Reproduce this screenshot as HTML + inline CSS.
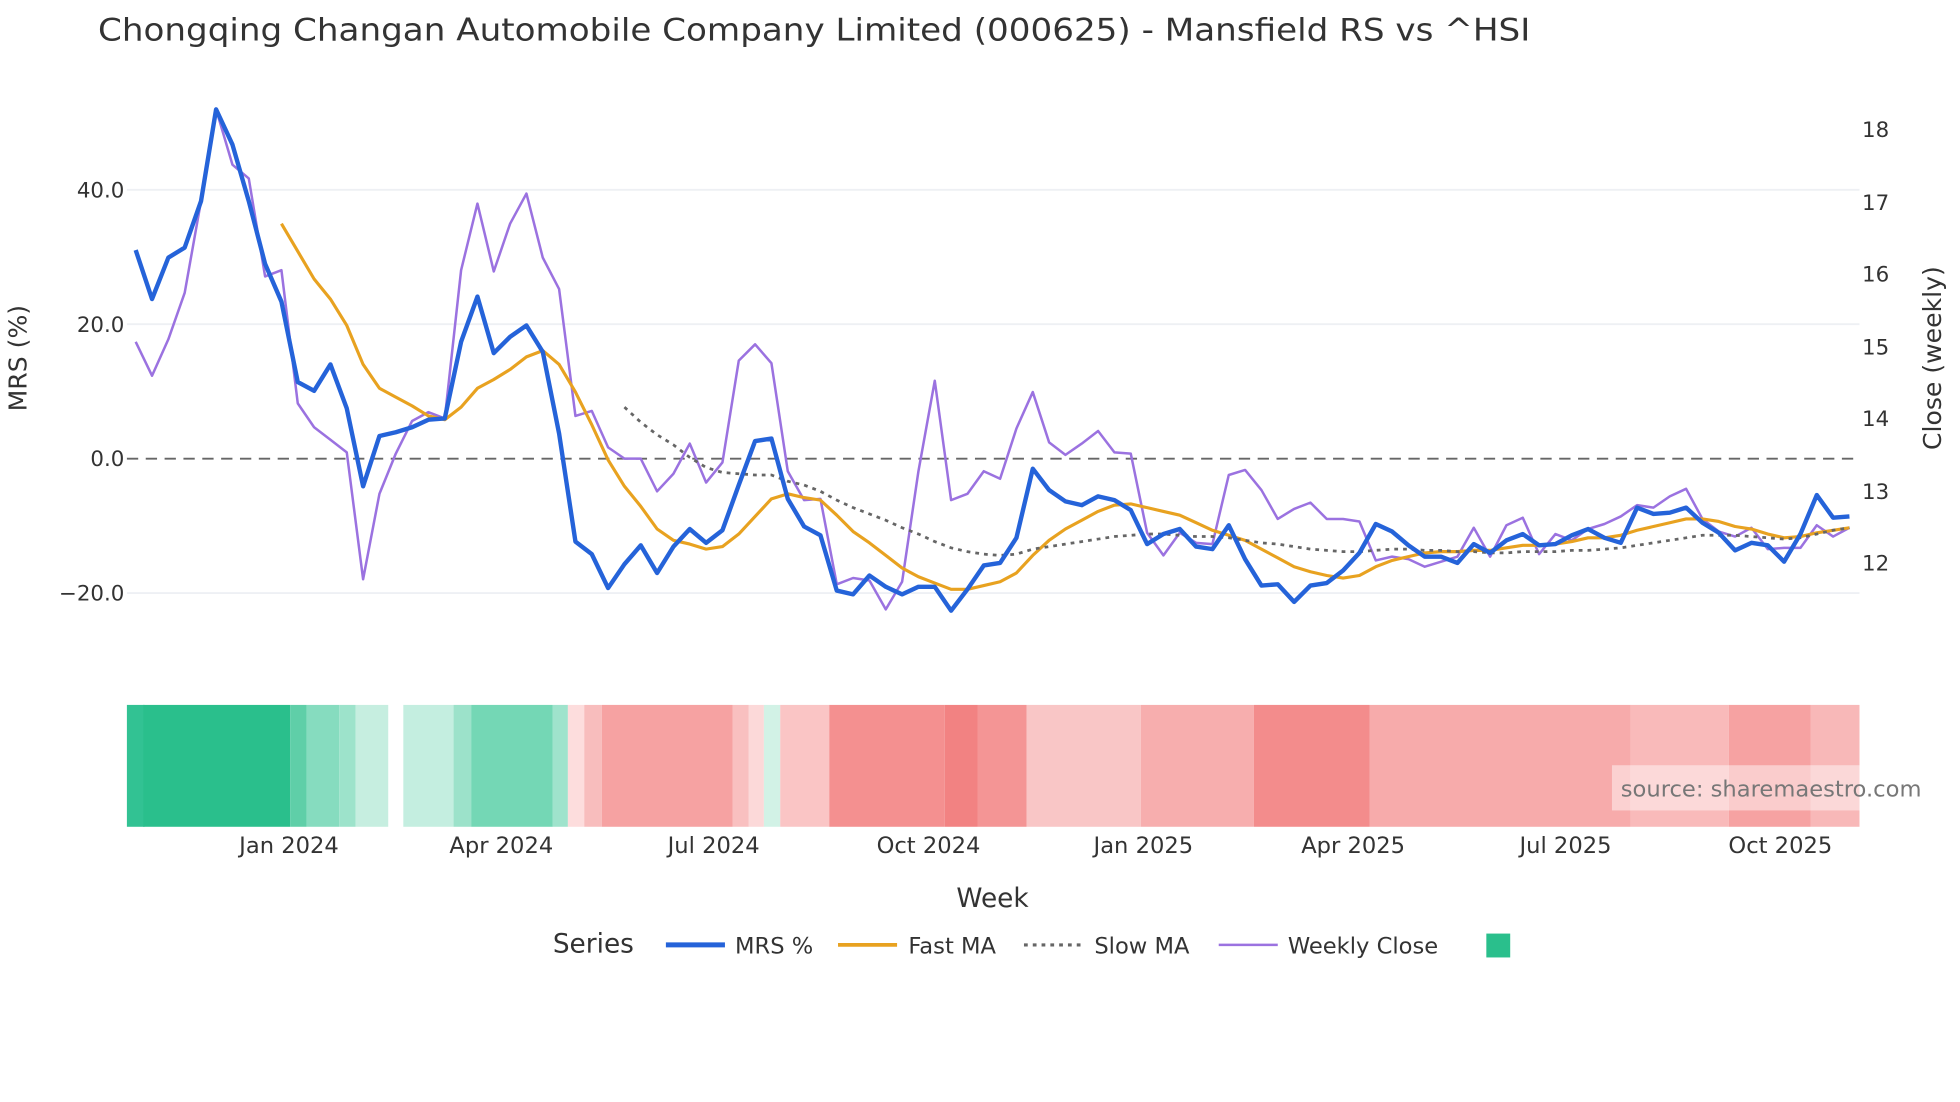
<!DOCTYPE html>
<html><head><meta charset="utf-8"><style>
html,body{margin:0;padding:0;background:#fff;}
svg{display:block;}
text{font-family:"DejaVu Sans","Liberation Sans",sans-serif;fill:#2a3f5f;}
</style></head><body>
<svg width="1960" height="1102" viewBox="0 0 1560 877" xmlns="http://www.w3.org/2000/svg">
<rect width="1560" height="877" fill="#fff"/>
<text x="78" y="32" font-size="25" fill="#333" style="fill:#333" textLength="1140" lengthAdjust="spacingAndGlyphs">Chongqing Changan Automobile Company Limited (000625) - Mansfield RS vs ^HSI</text>
<g stroke="#eef0f4" stroke-width="1.5">
<line x1="101" y1="151" x2="1480" y2="151"/><line x1="101" y1="258" x2="1480" y2="258"/><line x1="101" y1="472" x2="1480" y2="472"/>
</g>
<line x1="101" y1="365" x2="1480" y2="365" stroke="#666" stroke-width="1.5" stroke-dasharray="9,6"/>
<g font-size="17" style="fill:#333" text-anchor="end">
<text x="99" y="157" style="fill:#333">40.0</text><text x="99" y="264" style="fill:#333">20.0</text><text x="99" y="371" style="fill:#333">0.0</text><text x="99" y="478" style="fill:#333">−20.0</text>
</g>
<g font-size="17" style="fill:#333">
<text x="1482" y="109" style="fill:#333">18</text><text x="1482" y="167" style="fill:#333">17</text><text x="1482" y="224" style="fill:#333">16</text><text x="1482" y="282" style="fill:#333">15</text><text x="1482" y="339" style="fill:#333">14</text><text x="1482" y="397" style="fill:#333">13</text><text x="1482" y="454" style="fill:#333">12</text>
</g>
<text transform="translate(21,285) rotate(-90)" font-size="20" text-anchor="middle" style="fill:#333">MRS (%)</text>
<text transform="translate(1545,285) rotate(-90)" font-size="20" text-anchor="middle" style="fill:#333">Close (weekly)</text>

<polyline fill="none" stroke="#9b72e0" stroke-width="2" stroke-linejoin="round" points="108,272 121,299 134,270 147,233 160,160 172,87 185,131 198,142 211,220 224,215 237,321 250,340 263,350 276,360 289,461 302,393 315,361 328,335 341,328 354,333 367,215 380,162 393,216 406,178 419,154 432,205 445,230 458,331 471,327 484,356 497,365 510,365 523,391 536,377 549,353 562,384 575,368 588,287 601,274 614,289 627,375 640,398 653,397 666,465 679,460 692,462 705,485 718,463 731,375 744,303 757,398 770,393 783,375 796,381 809,341 822,312 835,352 848,362 861,353 874,343 887,360 900,361 913,424 926,442 939,424 952,432 965,433 978,378 991,374 1004,390 1017,413 1030,405 1043,400 1056,413 1069,413 1082,415 1095,446 1108,443 1121,445 1134,451 1147,447 1160,443 1173,420 1186,443 1199,418 1212,412 1225,441 1238,425 1251,430 1264,421 1277,417 1290,411 1303,402 1316,404 1329,395 1342,389 1355,413 1368,423 1381,427 1394,420 1407,437 1420,436 1433,436 1446,418 1459,427 1472,420"/>
<polyline fill="none" stroke="#e8a220" stroke-width="2.5" stroke-linejoin="round" points="224,178 237,200 250,222 263,238 276,259 289,290 302,309 315,316 328,323 341,331 354,334 367,324 380,309 393,302 406,294 419,284 432,279 445,290 458,312 471,338 484,366 497,387 510,403 523,421 536,430 549,433 562,437 575,435 588,425 601,411 614,397 627,393 640,396 653,398 666,410 679,423 692,432 705,442 718,452 731,459 744,464 757,469 770,469 783,466 796,463 809,456 822,442 835,430 848,421 861,414 874,407 887,402 900,401 913,404 926,407 939,410 952,416 965,422 978,426 991,430 1004,437 1017,444 1030,451 1043,455 1056,458 1069,460 1082,458 1095,451 1108,446 1121,443 1134,440 1147,439 1160,439 1173,438 1186,438 1199,436 1212,434 1225,434 1238,433 1251,431 1264,428 1277,428 1290,426 1303,422 1316,419 1329,416 1342,413 1355,413 1368,415 1381,419 1394,421 1407,425 1420,428 1433,427 1446,424 1459,422 1472,420"/>
<polyline fill="none" stroke="#666" stroke-width="2.2" stroke-dasharray="3,4" points="497,324 510,336 523,346 536,354 549,364 562,372 575,376 588,377 601,378 614,378 627,383 640,386 653,391 666,398 679,404 692,409 705,414 718,420 731,425 744,431 757,436 770,439 783,441 796,442 809,441 822,437 835,435 848,433 861,431 874,429 887,427 900,426 913,425 926,425 939,426 952,427 965,427 978,428 991,430 1004,432 1017,433 1030,435 1043,437 1056,438 1069,439 1082,439 1095,438 1108,437 1121,437 1134,438 1147,438 1160,439 1173,439 1186,440 1199,440 1212,439 1225,439 1238,439 1251,438 1264,438 1277,437 1290,436 1303,434 1316,432 1329,430 1342,428 1355,426 1368,426 1381,426 1394,427 1407,428 1420,429 1433,428 1446,425 1459,422 1472,420"/>
<polyline fill="none" stroke="#2563d9" stroke-width="3.5" stroke-linejoin="round" points="108,199 121,238 134,205 147,197 160,160 172,87 185,115 198,160 211,210 224,240 237,304 250,311 263,290 276,325 289,387 302,347 315,344 328,340 341,334 354,333 367,272 380,236 393,281 406,268 419,259 432,280 445,345 458,431 471,441 484,468 497,449 510,434 523,456 536,435 549,421 562,432 575,422 588,386 601,351 614,349 627,397 640,419 653,426 666,470 679,473 692,458 705,467 718,473 731,467 744,467 757,486 770,469 783,450 796,448 809,428 822,373 835,390 848,399 861,402 874,395 887,398 900,406 913,433 926,425 939,421 952,435 965,437 978,418 991,445 1004,466 1017,465 1030,479 1043,466 1056,464 1069,454 1082,440 1095,417 1108,423 1121,434 1134,443 1147,443 1160,448 1173,433 1186,440 1199,430 1212,425 1225,434 1238,433 1251,426 1264,421 1277,428 1290,432 1303,404 1316,409 1329,408 1342,404 1355,416 1368,424 1381,438 1394,432 1407,434 1420,447 1433,425 1446,394 1459,412 1472,411"/>

<g>
<rect x="101" y="561" width="14" height="97" fill="#32c293"/>
<rect x="114" y="561" width="117" height="97" fill="#2abf8c"/>
<rect x="231" y="561" width="13" height="97" fill="#5fcfa8"/>
<rect x="244" y="561" width="26" height="97" fill="#86dcbf"/>
<rect x="270" y="561" width="13" height="97" fill="#9de3cb"/>
<rect x="283" y="561" width="26" height="97" fill="#c6eee0"/>
<rect x="321" y="561" width="40" height="97" fill="#c4eee0"/>
<rect x="361" y="561" width="14" height="97" fill="#9ce2ca"/>
<rect x="375" y="561" width="65" height="97" fill="#74d7b5"/>
<rect x="440" y="561" width="12" height="97" fill="#9fe3cc"/>
<rect x="452" y="561" width="13" height="97" fill="#fddddd"/>
<rect x="465" y="561" width="14" height="97" fill="#f8bdbd"/>
<rect x="479" y="561" width="104" height="97" fill="#f6a2a2"/>
<rect x="583" y="561" width="13" height="97" fill="#f9c0c0"/>
<rect x="596" y="561" width="12" height="97" fill="#fcd9d9"/>
<rect x="608" y="561" width="13" height="97" fill="#d2f2e6"/>
<rect x="621" y="561" width="39" height="97" fill="#fac5c5"/>
<rect x="660" y="561" width="92" height="97" fill="#f49090"/>
<rect x="752" y="561" width="26" height="97" fill="#f28282"/>
<rect x="778" y="561" width="39" height="97" fill="#f49595"/>
<rect x="817" y="561" width="91" height="97" fill="#f9c6c6"/>
<rect x="908" y="561" width="90" height="97" fill="#f7aeae"/>
<rect x="998" y="561" width="92" height="97" fill="#f38c8c"/>
<rect x="1090" y="561" width="208" height="97" fill="#f7abab"/>
<rect x="1298" y="561" width="78" height="97" fill="#f9baba"/>
<rect x="1376" y="561" width="65" height="97" fill="#f6a2a2"/>
<rect x="1441" y="561" width="39" height="97" fill="#f8b8b8"/>
</g>
<rect x="1283" y="609" width="277" height="36" fill="#fff" fill-opacity="0.45"/>
<text x="1290" y="634" font-size="18" style="fill:#777">source: sharemaestro.com</text>

<g font-size="18" text-anchor="middle" style="fill:#333">
<text x="230" y="679" style="fill:#333">Jan 2024</text><text x="399" y="679" style="fill:#333">Apr 2024</text><text x="568" y="679" style="fill:#333">Jul 2024</text><text x="739" y="679" style="fill:#333">Oct 2024</text><text x="910" y="679" style="fill:#333">Jan 2025</text><text x="1077" y="679" style="fill:#333">Apr 2025</text><text x="1246" y="679" style="fill:#333">Jul 2025</text><text x="1417" y="679" style="fill:#333">Oct 2025</text>
</g>
<text x="790" y="722" font-size="21" text-anchor="middle" style="fill:#333">Week</text>
<text x="440" y="758" font-size="21" style="fill:#333">Series</text>
<line x1="530" y1="752" x2="577" y2="752" stroke="#2563d9" stroke-width="4"/>
<text x="585" y="759" font-size="18" style="fill:#333">MRS %</text>
<line x1="667" y1="752" x2="714" y2="752" stroke="#e8a220" stroke-width="3"/>
<text x="723" y="759" font-size="18" style="fill:#333">Fast MA</text>
<line x1="815" y1="752" x2="860" y2="752" stroke="#666" stroke-width="2.5" stroke-dasharray="3,4"/>
<text x="871" y="759" font-size="18" style="fill:#333">Slow MA</text>
<line x1="970" y1="752" x2="1017" y2="752" stroke="#9b72e0" stroke-width="2"/>
<text x="1025" y="759" font-size="18" style="fill:#333">Weekly Close</text>
<rect x="1183" y="743" width="19" height="19" fill="#2abf8c"/>
</svg>
</body></html>
